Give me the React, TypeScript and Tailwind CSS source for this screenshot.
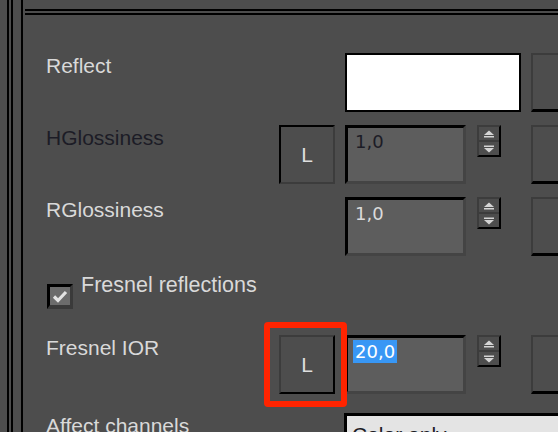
import React from 'react';

const labelFont = { fontFamily: '"Liberation Sans", Arial, sans-serif' };
const numFont = { fontFamily: '"DejaVu Sans", Verdana, sans-serif' };

const Spinner = () => (
  <div className="flex h-[32px] w-[24px] shrink-0 flex-col border-2 border-t-[#3c3c3c] border-l-[#3c3c3c] border-r-black border-b-black">
    <div className="flex flex-1 items-center justify-center border-b-2 border-b-[#3c3c3c]">
      <svg width="12" height="8" viewBox="0 0 12 8">
        <path d="M1 5 L6 0.5 L11 5 Z" fill="#d4d4d4" />
        <rect x="1" y="6" width="10" height="1.5" fill="#d4d4d4" />
      </svg>
    </div>
    <div className="flex flex-1 items-center justify-center">
      <svg width="12" height="8" viewBox="0 0 12 8">
        <rect x="1" y="0.5" width="10" height="1.5" fill="#d4d4d4" />
        <path d="M1 3 L6 7.5 L11 3 Z" fill="#d4d4d4" />
      </svg>
    </div>
  </div>
);

const LButton = ({ sunken }: { sunken?: boolean }) => (
  <div
    className={`flex h-[59px] w-[56px] shrink-0 items-center justify-center border-2 text-[21px] text-[#dedede] ${
      sunken
        ? 'border-t-black border-l-black border-r-[#3c3c3c] border-b-[#3c3c3c]'
        : 'border-t-[#3c3c3c] border-l-[#3c3c3c] border-r-black border-b-black'
    }`}
    style={labelFont}
  >
    L
  </div>
);

const NumInput = ({ value, dark, selected }: { value: string; dark?: boolean; selected?: boolean }) => (
  <div className="h-[59px] w-[121px] shrink-0 border-[3px] border-t-black border-l-black border-r-[#444444] border-b-[#444444] bg-[#5d5d5d] pl-[5px] pt-[2px]">
    <span
      className={`inline-block px-[2px] text-[18px] leading-[23px] ${
        selected ? 'bg-[#3897f5] text-white' : dark ? 'text-[#1c1c26]' : 'text-[#dadada]'
      }`}
      style={numFont}
    >
      {value}
    </span>
  </div>
);

const SideBox = () => (
  <div className="ml-[30px] h-[59px] w-[40px] shrink-0 border-t-2 border-l-2 border-b-[3px] border-t-[#3c3c3c] border-l-[#3c3c3c] border-b-black" />
);

const Label = ({ children, dark }: { children: React.ReactNode; dark?: boolean }) => (
  <div
    className={`w-[233px] shrink-0 pt-[1px] text-[21px] leading-[24px] ${dark ? 'text-[#1c1c26]' : 'text-[#d9d9d9]'}`}
    style={labelFont}
  >
    {children}
  </div>
);

export default function App() {
  return (
    <div className="relative flex h-[432px] w-[558px] overflow-hidden bg-[#4d4d4d]">
      {/* left frame lines */}
      <div className="flex h-full w-[25px] shrink-0">
        <div className="w-[7px] shrink-0" />
        <div className="w-[2px] shrink-0 bg-black" />
        <div className="w-[2px] shrink-0" />
        <div className="w-[2px] shrink-0 bg-black" />
        <div className="w-[8px] shrink-0" />
        <div className="w-[2px] shrink-0 bg-black" />
      </div>

      <div className="flex min-w-0 flex-1 flex-col">
        <div className="mt-[9px] h-[2px] shrink-0 bg-black" />
        <div className="h-[2px] shrink-0" />
        <div className="h-[2px] shrink-0 bg-black" />

        <div className="flex shrink-0 flex-col pl-[21px] pt-[38px]">
          {/* Reflect */}
          <div className="flex h-[59px] shrink-0 items-start">
            <Label>Reflect</Label>
            <div className="w-[66px] shrink-0" />
            <div className="h-[59px] w-[176px] shrink-0 border-2 border-black bg-white" />
            <div className="w-[10px] shrink-0" />
            <div className="h-[59px] w-[40px] shrink-0 border-t-2 border-l-2 border-b-[3px] border-t-[#3c3c3c] border-l-[#3c3c3c] border-b-black" />
          </div>

          {/* HGlossiness */}
          <div className="mt-[13px] flex h-[59px] shrink-0 items-start">
            <Label dark>HGlossiness</Label>
            <LButton sunken />
            <div className="w-[10px] shrink-0" />
            <NumInput value="1,0" dark />
            <div className="w-[11px] shrink-0" />
            <Spinner />
            <SideBox />
          </div>

          {/* RGlossiness */}
          <div className="mt-[13px] flex h-[59px] shrink-0 items-start">
            <Label>RGlossiness</Label>
            <div className="w-[66px] shrink-0" />
            <NumInput value="1,0" />
            <div className="w-[11px] shrink-0" />
            <Spinner />
            <SideBox />
          </div>

          {/* Fresnel reflections */}
          <div className="mt-[17px] flex h-[40px] shrink-0 items-start">
            <div className="ml-[1px] mt-[11px] flex h-[25px] w-[26px] shrink-0 items-center justify-center border-t-[3px] border-l-[3px] border-r-[3px] border-b-[4px] border-t-black border-l-black border-r-[#3a3a3a] border-b-[#3a3a3a] bg-[#6c6c6c]">
              <svg width="16" height="13" viewBox="0 0 16 13">
                <path d="M2 6.5 L6 10.5 L14 2" fill="none" stroke="#e4e4e4" strokeWidth="3.2" />
              </svg>
            </div>
            <div className="ml-[8px] text-[21.5px] leading-[24px] text-[#d9d9d9]" style={labelFont}>
              Fresnel reflections
            </div>
          </div>

          {/* Fresnel IOR */}
          <div className="mt-[22px] flex h-[59px] shrink-0 items-start">
            <Label>Fresnel IOR</Label>
            <LButton />
            <div className="w-[10px] shrink-0" />
            <NumInput value="20,0" selected />
            <div className="w-[11px] shrink-0" />
            <Spinner />
            <SideBox />
          </div>

          {/* Affect channels */}
          <div className="mt-[19px] flex h-[40px] shrink-0 items-start">
            <Label>Affect channels</Label>
            <div className="w-[65px] shrink-0" />
            <div
              className="h-[40px] w-[230px] shrink-0 border-t-[3px] border-l-[3px] border-black bg-[#e4e4e4] pl-[5px] pt-[7px] text-[21px] leading-[24px] text-[#1c1c26]"
              style={labelFont}
            >
              Color only
            </div>
          </div>
        </div>
      </div>

      {/* red annotation box */}
      <div className="pointer-events-none absolute left-[264px] top-[322px] h-[85px] w-[83px] rounded-[4px] border-[6px] border-[#ff2400]" />
    </div>
  );
}
